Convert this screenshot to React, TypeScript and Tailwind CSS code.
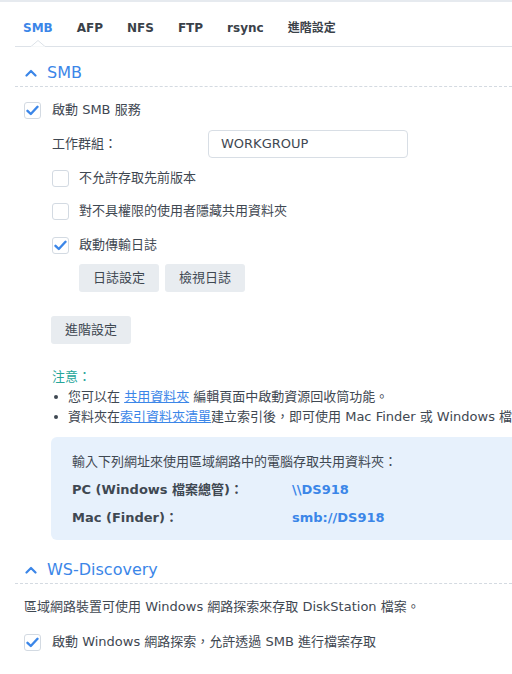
import React from "react";

const font = { fontFamily: '"DejaVu Sans", "Noto Sans CJK TC", sans-serif' };

function Check({ checked }: { checked: boolean }) {
  return (
    <div className="w-[17px] h-[17px] shrink-0 rounded-[3px] border border-[#d3dae2] bg-white flex items-center justify-center">
      {checked && (
        <svg width="13" height="11" viewBox="0 0 13 11">
          <path d="M1.5 5.8 L4.8 9 L11.5 1.8" fill="none" stroke="#3b86e8" strokeWidth="2.4" strokeLinecap="round" strokeLinejoin="round" />
        </svg>
      )}
    </div>
  );
}

function Chevron() {
  return (
    <svg width="12" height="8" viewBox="0 0 12 8" className="shrink-0">
      <path d="M1.5 6.5 L6 2 L10.5 6.5" fill="none" stroke="#3b86e8" strokeWidth="2.2" strokeLinecap="round" strokeLinejoin="round" />
    </svg>
  );
}

function SectionHeader({ title }: { title: string }) {
  return (
    <div className="ml-[15px] border-b border-dashed border-[#d4dae1] flex items-center h-[40px] pl-[10px] pt-[13px]">
      <Chevron />
      <span className="ml-[10px] text-[16px] text-[#3b86e8] leading-[20px]">{title}</span>
    </div>
  );
}

function Btn({ children }: { children: React.ReactNode }) {
  return (
    <div className="h-[28px] w-[80px] rounded-[3px] bg-[#e8ecf0] flex items-center justify-center text-[13px] text-[#3f4852]">
      {children}
    </div>
  );
}

function Bullet({ children }: { children: React.ReactNode }) {
  return (
    <div className="flex items-center h-[20px]">
      <div className="w-[16px] shrink-0 flex">
        <div className="ml-[2px] w-[4px] h-[4px] rounded-full bg-[#3f4852]" />
      </div>
      <span className="shrink-0">{children}</span>
    </div>
  );
}

export default function App() {
  const tabs = ["AFP", "NFS", "FTP", "rsync", "進階設定"];
  return (
    <div className="w-[512px] h-[674px] bg-white overflow-hidden border-t-2 border-[#e6eaef] text-[#3f4852]" style={font}>
      {/* Tabs */}
      <div className="relative ml-[15px] h-[45px] border-b border-[#dde2e8] flex items-center pl-[8px] gap-[24px] pt-[7px]">
        <span className="text-[12px] font-bold text-[#3b86e8]">SMB</span>
        {tabs.map((t) => (
          <span key={t} className="text-[12px] font-bold text-[#3a4149]">{t}</span>
        ))}
        <svg className="absolute left-[16px] bottom-[-1px]" width="14" height="7" viewBox="0 0 14 7">
          <path d="M0 6.5 L7 0.5 L14 6.5" fill="white" stroke="#dde2e8" strokeWidth="1" />
          <rect x="0" y="6.5" width="14" height="1" fill="white" />
        </svg>
      </div>

      <SectionHeader title="SMB" />

      <div className="pl-[24px] mt-[14px] flex items-center gap-[11px] h-[18px] text-[13px]">
        <Check checked />
        <span>啟動 SMB 服務</span>
      </div>

      <div className="pl-[52px] mt-[11px] flex items-center h-[28px] text-[13px]">
        <span className="w-[156px]">工作群組：</span>
        <div className="w-[200px] h-[28px] border border-[#d8dee5] rounded-[4px] flex items-center pl-[12px] text-[13px] text-[#3f4852]">
          WORKGROUP
        </div>
      </div>

      <div className="pl-[52px] mt-[11px] flex items-center gap-[10px] h-[18px] text-[13px]">
        <Check checked={false} />
        <span>不允許存取先前版本</span>
      </div>
      <div className="pl-[52px] mt-[15px] flex items-center gap-[10px] h-[18px] text-[13px]">
        <Check checked={false} />
        <span>對不具權限的使用者隱藏共用資料夾</span>
      </div>
      <div className="pl-[52px] mt-[16px] flex items-center gap-[10px] h-[18px] text-[13px]">
        <Check checked />
        <span>啟動傳輸日誌</span>
      </div>

      <div className="pl-[79px] mt-[10px] flex gap-[6px]">
        <Btn>日誌設定</Btn>
        <Btn>檢視日誌</Btn>
      </div>

      <div className="pl-[51px] mt-[24px] flex">
        <Btn>進階設定</Btn>
      </div>

      <div className="pl-[52px] mt-[23px] text-[13px] leading-[20px] text-[#26a69a]">注意：</div>
      <div className="pl-[52px] text-[13px] leading-[20px] whitespace-nowrap overflow-hidden">
        <Bullet>
          您可以在 <span className="text-[#3b86e8] underline">共用資料夾</span> 編輯頁面中啟動資源回收筒功能。
        </Bullet>
        <Bullet>
          資料夾在<span className="text-[#3b86e8] underline">索引資料夾清單</span>建立索引後，即可使用 Mac Finder 或 Windows 檔案總管搜尋。
        </Bullet>
      </div>

      <div className="ml-[51px] mt-[10px] h-[103px] rounded-l-[6px] bg-[#e7f1fc] pl-[21px] pt-[15px] text-[13px] whitespace-nowrap">
        <div className="leading-[20px]">輸入下列網址來使用區域網路中的電腦存取共用資料夾：</div>
        <div className="flex leading-[20px] mt-[8px] font-bold">
          <span className="w-[220px]">PC (Windows 檔案總管)：</span>
          <span className="text-[#3b86e8]">\\DS918</span>
        </div>
        <div className="flex leading-[20px] mt-[8px] font-bold">
          <span className="w-[220px]">Mac (Finder)：</span>
          <span className="text-[#3b86e8]">smb://DS918</span>
        </div>
      </div>

      <div className="mt-[4px]">
        <SectionHeader title="WS-Discovery" />
      </div>

      <div className="pl-[24px] mt-[13px] text-[13px] leading-[20px] whitespace-nowrap">
        區域網路裝置可使用 Windows 網路探索來存取 DiskStation 檔案。
      </div>

      <div className="pl-[24px] mt-[16px] flex items-center gap-[11px] h-[18px] text-[13px] whitespace-nowrap">
        <Check checked />
        <span>啟動 Windows 網路探索，允許透過 SMB 進行檔案存取</span>
      </div>
    </div>
  );
}
